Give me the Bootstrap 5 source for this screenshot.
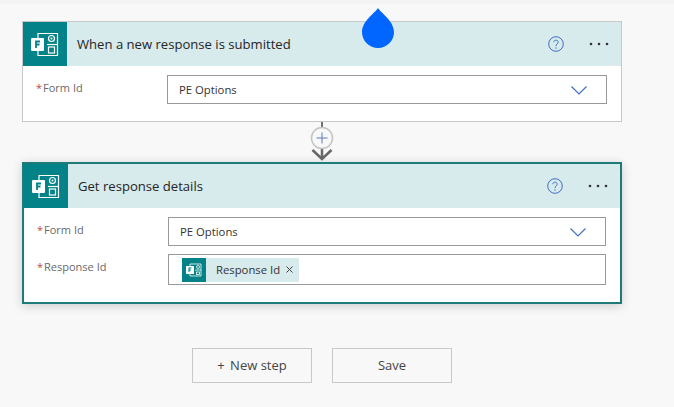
<!DOCTYPE html>
<html lang="en">

<head>
    <meta charset="UTF-8">
    <meta name="viewport" content="width=device-width, initial-scale=1.0">
    <title>Flow designer</title>
    <link href="https://cdn.jsdelivr.net/npm/bootstrap@5.3.0/dist/css/bootstrap.min.css" rel="stylesheet">
    <style>
        body {
            background: #f8f8f8;
            font-family: "Open Sans", "Liberation Sans", sans-serif;
            color: #333;
            overflow: hidden;
        }

        .top-strip {
            height: 4px;
            background: #f3f3f3;
        }

        .canvas {
            position: relative;
            height: 403px;
            padding: 17px 52px 0 22px;
        }

        .drop-mark {
            position: absolute;
            left: 362px;
            top: 4px;
        }

        .step-box {
            background: #fff;
            border: 1px solid #c8c8c8;
            width: 600px;
        }

        .step-box.selected {
            border: 2px solid #1f7a7a;
            box-shadow: 0 2px 10px rgba(0, 0, 0, .18);
        }

        .step-head {
            height: 44px;
            background: #d7eaec;
        }

        .step-logo {
            width: 44px;
            height: 44px;
            background: #038387;
        }

        .step-title {
            font-size: 13.1px;
            color: #252525;
            margin-left: 10px;
            padding-top: 1px;
        }

        .help-btn {
            margin-right: 25px;
        }

        .dots {
            margin-right: 12px;
        }

        .step-form {
            padding: 9px 14px 17px 13px;
        }

        .form-line {
            margin-bottom: 8px;
        }

        .form-line:last-child {
            margin-bottom: 0;
        }

        .field-label {
            width: 131px;
            flex: none;
            font-size: 11px;
            color: #6a6a6a;
            padding-top: 5px;
        }

        .field-label i {
            color: #c0474d;
            font-style: normal;
            margin-right: 1px;
        }

        .field-box {
            flex: 1;
            height: 29px;
            border: 1px solid #999;
            background: #fff;
            padding: 1px 19px 0 11px;
            font-size: 11.3px;
            color: #333;
        }

        .field-box.tall {
            height: 31px;
            padding: 1px 13px;
        }

        .token {
            height: 24px;
            background: #d7eaec;
            font-size: 11.3px;
        }

        .token-logo {
            width: 24px;
            height: 24px;
            background: #038387;
        }

        .token-name {
            margin: 1px 6px 0 10px;
        }

        .token-close {
            margin-right: 6px;
        }

        .link-gap {
            position: relative;
            height: 40px;
            width: 600px;
        }

        .flow-btn {
            width: 120px;
            height: 35px;
            border: 1px solid #c8c8c8;
            border-radius: 0;
            background: #f8f8f8;
            font-size: 13px;
            color: #444;
            padding: 0;
        }

        .plus-sign {
            margin-right: 2px;
        }

        .btn-row {
            margin: 44px 0 0 170px;
            gap: 20px;
        }
    </style>
</head>

<body>
    <div class="top-strip"></div>
    <div class="canvas">
        <svg class="drop-mark" width="32" height="40" viewBox="0 0 32 40">
            <path d="M16 0C19 5 32 13 32 24A16 16 0 0 1 0 24C0 13 13 5 16 0Z" fill="#0066ff" />
        </svg>

        <!-- Trigger -->
        <div class="step-box">
            <div class="step-head d-flex align-items-center">
                <div class="step-logo d-flex align-items-center justify-content-center">
                    <svg width="28" height="25" viewBox="0 0 28 25" fill="none" stroke="#fff" stroke-width="1.2">
                        <path d="M7 6V1.500H26.500V23.500H7V18" />
                        <path d="M16 12.500H26.500" />
                        <circle cx="20.500" cy="6.500" r="3" />
                        <circle cx="20.500" cy="6.500" r="1" fill="#fff" stroke="none" />
                        <rect x="17.500" y="15" width="6" height="6" />
                        <rect x="0" y="6" width="13" height="13" rx="1" fill="#fff" stroke="none" />
                        <path d="M5 16V9.500H9M5 12.500H8.500" stroke="#038387" stroke-width="1.800" />
                    </svg>
                </div>
                <div class="step-title flex-grow-1">When a new response is submitted</div>
                <svg class="help-btn" width="16" height="16" viewBox="0 0 16 16" fill="none" stroke="#3f6fc4">
                    <circle cx="8" cy="8" r="7.300" />
                    <path d="M5.800 6.200C5.800 3.500 10.200 3.500 10.200 6.200C10.200 7.800 8 7.800 8 10" />
                    <circle cx="8" cy="12" r=".7" fill="#3f6fc4" stroke="none" />
                </svg>
                <svg class="dots" width="20" height="4" viewBox="0 0 20 4" fill="#333">
                    <circle cx="2" cy="2" r="1.300" />
                    <circle cx="10" cy="2" r="1.300" />
                    <circle cx="18" cy="2" r="1.300" />
                </svg>
            </div>
            <div class="step-form">
                <div class="form-line d-flex">
                    <div class="field-label"><i>*</i>Form Id</div>
                    <div class="field-box d-flex align-items-center justify-content-between">
                        <span>PE Options</span>
                        <svg width="16" height="9" viewBox="0 0 16 9" fill="none" stroke="#3f6fc4" stroke-width="1.200">
                            <path d="M.5 .5L8 8L15.500 .5" />
                        </svg>
                    </div>
                </div>
            </div>
        </div>

        <!-- Connector -->
        <div class="link-gap">
            <svg class="position-absolute top-0 start-0" width="600" height="40" viewBox="0 0 600 40" fill="none">
                <path d="M300 0V5" stroke="#444" stroke-width="1.500" />
                <path d="M300 27V37M290.500 28L300 37L309.500 28" stroke="#666" stroke-width="2.500" />
                <circle cx="300" cy="16" r="10.500" fill="#f8f8f8" stroke="#c4c4c4" stroke-width="1.500" />
                <path d="M300 10.500V21.500M294.500 16H305.500" stroke="#5b7cb8" />
            </svg>
        </div>

        <!-- Action -->
        <div class="step-box selected">
            <div class="step-head d-flex align-items-center">
                <div class="step-logo d-flex align-items-center justify-content-center">
                    <svg width="28" height="25" viewBox="0 0 28 25" fill="none" stroke="#fff" stroke-width="1.2">
                        <path d="M7 6V1.500H26.500V23.500H7V18" />
                        <path d="M16 12.500H26.500" />
                        <circle cx="20.500" cy="6.500" r="3" />
                        <circle cx="20.500" cy="6.500" r="1" fill="#fff" stroke="none" />
                        <rect x="17.500" y="15" width="6" height="6" />
                        <rect x="0" y="6" width="13" height="13" rx="1" fill="#fff" stroke="none" />
                        <path d="M5 16V9.500H9M5 12.500H8.500" stroke="#038387" stroke-width="1.800" />
                    </svg>
                </div>
                <div class="step-title flex-grow-1">Get response details</div>
                <svg class="help-btn" width="16" height="16" viewBox="0 0 16 16" fill="none" stroke="#3f6fc4">
                    <circle cx="8" cy="8" r="7.300" />
                    <path d="M5.800 6.200C5.800 3.500 10.200 3.500 10.200 6.200C10.200 7.800 8 7.800 8 10" />
                    <circle cx="8" cy="12" r=".7" fill="#3f6fc4" stroke="none" />
                </svg>
                <svg class="dots" width="20" height="4" viewBox="0 0 20 4" fill="#333">
                    <circle cx="2" cy="2" r="1.300" />
                    <circle cx="10" cy="2" r="1.300" />
                    <circle cx="18" cy="2" r="1.300" />
                </svg>
            </div>
            <div class="step-form">
                <div class="form-line d-flex">
                    <div class="field-label"><i>*</i>Form Id</div>
                    <div class="field-box d-flex align-items-center justify-content-between">
                        <span>PE Options</span>
                        <svg width="16" height="9" viewBox="0 0 16 9" fill="none" stroke="#3f6fc4" stroke-width="1.200">
                            <path d="M.5 .5L8 8L15.500 .5" />
                        </svg>
                    </div>
                </div>
                <div class="form-line d-flex">
                    <div class="field-label"><i>*</i>Response Id</div>
                    <div class="field-box tall d-flex align-items-center">
                        <div class="token d-flex align-items-center">
                            <div class="token-logo d-flex align-items-center justify-content-center">
                                <svg width="16" height="14" viewBox="0 0 16 14" fill="none" stroke="#fff" stroke-width=".8">
                                    <path d="M4 3V1H15V13H4V11M9 7H15" />
                                    <circle cx="12" cy="4" r="1.500" />
                                    <rect x="10.500" y="9" width="3" height="2.500" />
                                    <rect x="0" y="3" width="8" height="8" rx=".5" fill="#fff" stroke="none" />
                                    <path d="M3 9V5H5.500M3 7H5" stroke="#038387" stroke-width="1.100" />
                                </svg>
                            </div>
                            <span class="token-name">Response Id</span>
                            <svg class="token-close" width="7" height="7" viewBox="0 0 7 7" stroke="#444">
                                <path d="M.5 .5L6.500 6.500M6.500 .5L.5 6.500" />
                            </svg>
                        </div>
                    </div>
                </div>
            </div>
        </div>

        <div class="btn-row d-flex">
            <button type="button" class="btn flow-btn"><span class="plus-sign">+</span> New step</button>
            <button type="button" class="btn flow-btn">Save</button>
        </div>
    </div>

    <script src="https://cdn.jsdelivr.net/npm/bootstrap@5.3.0/dist/js/bootstrap.bundle.min.js"></script>
</body>

</html>
